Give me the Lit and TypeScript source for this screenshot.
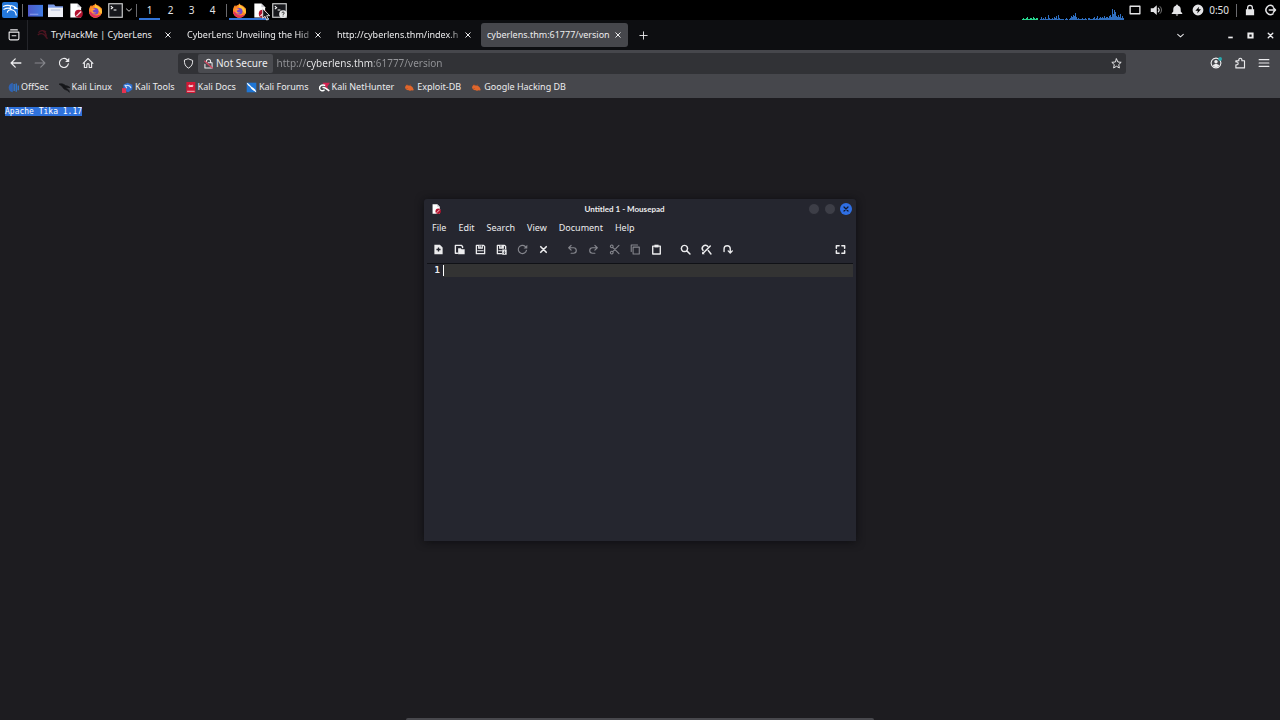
import { LitElement, html, svg, css, nothing } from "lit";
import type { TemplateResult } from "lit";
import { customElement, property } from "lit/decorators.js";
import { classMap } from "lit/directives/class-map.js";

/* Every glyph is drawn on a 16 x 16 grid. */
const line = (d: string, w = 1.4) =>
  svg`<path d=${d} fill="none" stroke="currentColor" stroke-width=${w} stroke-linecap="round" stroke-linejoin="round"/>`;
const solid = (d: string) => svg`<path d=${d} fill="currentColor" fill-rule="evenodd"/>`;

const bug = svg`<path d="M2.500 5.500l2-1.500 2 1 3 0 3 2.500 1.500 3.500 0 1-2 .5-2-.5-1 1-2-1-3-.5-2-2-.5-2z" fill="#e0662c"/><path d="M5 5l-1-2M9 5l1-2M5 9l-2 2" stroke="#8d4526" stroke-width="1"/>`;

const notepad = svg`<path d="M2.500 .5h7.500l4 4v11H2.500z" fill="#fff"/><path d="M10 .5v4h4z" fill="#c9c9cf"/><circle cx="11.500" cy="11.500" r="4.300" fill="#b3132f"/><path d="M9 14l5-5" stroke="#f7d9de" stroke-width="1.500"/>`;

const firefox = svg`<circle cx="8" cy="8.800" r="6.900" fill="#ff7a1e"/><path d="M1.200 7C1.500 4.500 2.500 3 3.500 2c.1 1.300.6 2 1.500 2.400C5.600 2.500 7 1.600 8.500.6c-.2 1.700 1 2.500 2.500 3.200 1.500.7 2.500 1.600 2.600 2.700.2-.7 0-1.600-.4-2.500C15 6 15.500 9 14.300 11.500 12.500 15.500 6.500 17 3 13.500 1.400 11.800.9 9.500 1.200 7z" fill="#ff8a25"/><path d="M8.500.6c-.2 1.700 1 2.500 2.500 3.200 2.500 1.200 3.300 3.500 2.600 6 1.300-2 1-4.200-.4-5.800C15 6 15.500 9 14.300 11.500L11 8 7 4z" fill="#ffc83a"/><path d="M1.200 9c.3 3 2.500 6.300 6.800 6.500 3 .1 5-1.500 6-3.500-3 2-9 2-10-2.500z" fill="#e5305f"/><circle cx="7.700" cy="8.800" r="3.500" fill="#7547cf"/><path d="M3.500 6.500c1.500-1 3-.5 4.500.3-1.500.2-2 1-3 1.200.2 2 2.500 2.600 4 1.800-1.200 2-4.500 1.700-5.500-.3z" fill="#ff9640"/>`;

const terminal = svg`<rect x=".8" y=".8" width="14.400" height="14.400" fill="#17181c" stroke="#d6d6d6" stroke-width="1.200"/><path d="M3 3.500l2 1.500-2 1.500M6 7.500h3" fill="none" stroke="#fff" stroke-width="1.100"/>`;

const icons: Record<string, TemplateResult> = {
  kali: svg`<rect width="16" height="16" rx="2" fill="#2477d8"/><path d="M1 4.500c3-1.300 6-1.500 8.300-.2M1.500 7.500c3-1.500 5.300-1.700 7.300-.8M9 3.500c-1.500 2.300-.5 4 1.500 4.500 2.200.5 3.500 2.500 3.800 5.500M9 3.500l3 1 2.500 2-2.500-.3M9.500 7.800c-2-.3-4 .8-4.200 2.800" fill="none" stroke="#fff" stroke-width="1.200"/>`,
  desktop: svg`<defs><linearGradient id="g" x2="1"><stop stop-color="#4f59c8"/><stop offset="1" stop-color="#3f7be0"/></linearGradient></defs><rect y="2" width="16" height="12.500" fill="url(#g)"/><path d="M2 12h9" stroke="#93a5ee"/>`,
  folder: svg`<path d="M0 1.500h6.500l1.500 2h8V15H0z" fill="#7c9be6"/><path d="M0 5h16v10H0z" fill="#eceef4"/><path d="M3 7.500h10" stroke="#aab6d4"/>`,
  notepad, firefox, terminal,
  runner: svg`${terminal}<circle cx="11.800" cy="11.800" r="4.200" fill="#e8e8e8"/><path d="M10.500 10.800c.2-1.600 2.700-1.400 2.500 0-.1.900-1.200.9-1.200 1.800M11.800 13.500v.8" fill="none" stroke="#222" stroke-width="1"/>`,
  down: line("M3 6l5 4.500L13 6", 1.8),
  display: line("M1.500 3h13v10h-13z", 1.8),
  volume: svg`${solid("M1 5.500h3.500L9 1.500v13L4.500 10.500H1z")}${line("M11 5.500c1.300 1.300 1.300 3.700 0 5", 1.5)}<path d="M13 3c3 2.500 3 7.500 0 10" fill="none" stroke="#777" stroke-width="1.300"/>`,
  bell: solid("M8 .8c.8 0 1.300.5 1.300 1.200C12 2.800 13 5 13 7.500V10l2 2.200v1H1v-1L3 10V7.500C3 5 4 2.800 6.700 2 6.700 1.300 7.200.8 8 .8zM6.300 14h3.400c-.2 2-3.200 2-3.400 0z"),
  power: solid("M8 .8a7.200 7.200 0 1 0 0 14.400A7.200 7.200 0 0 0 8 .8zM9.500 3.500L8.700 7H12l-5 5.800.8-3.800H4.500z"),
  padlock: solid("M4 7V5a4 4 0 0 1 8 0v2h1.500v8h-11V7zM5.700 7h4.600V5a2.300 2.300 0 0 0-4.600 0z"),
  logout: line("M12 3A6 6 0 1 0 12 13M7 8h8M12.500 5L15.300 8l-2.800 3", 2),
  allTabs: svg`${line("M3.500 1.200h9M1.500 4.200h13v8.300a2 2 0 0 1-2 2h-9a2 2 0 0 1-2-2z", 1.5)}${line("M5.500 9h5", 1.6)}`,
  thm: svg`<path d="M2 5c2-3 7-4 10-1M1 8c3-2.500 7-2 9 0M8 3c2 1 5 4 4 8M10 8l4 5" fill="none" stroke="#4c1420" stroke-width="1.800"/>`,
  close: line("M3.500 3.500l9 9M12.500 3.500l-9 9", 2),
  plus: line("M8 1.500v13M1.500 8h13", 1.6),
  minimize: solid("M4 10h8v3H4z"),
  restore: solid("M2.500 2.500h11v11h-11zM6 6v4h4V6z"),
  bigX: line("M4 4l8 8M12 4l-8 8", 2.4),
  back: line("M14.500 8h-13M7 2.500L1.500 8 7 13.500", 1.7),
  forward: line("M1.500 8h13M9 2.500L14.500 8 9 13.500", 1.5),
  reload: svg`${line("M13.800 9A6 6 0 1 1 12 3.600l1.500 1.300", 1.6)}${solid("M15 1v5.500H9.500z")}`,
  home: line("M1.500 8.500L8 2l6.500 6.500M3.200 7.500V14h3.200v-3.500a1.600 1.600 0 0 1 3.200 0V14h3.200V7.500", 1.5),
  shield: line("M8 1.300l6 2.200c.2 5-1.200 8.800-6 11.200C3.200 12.300 1.800 8.500 2 3.500z", 1.4),
  insecure: svg`${line("M5 7V4.800a3 3 0 0 1 6 0V7M2.800 14.500h10.400V7H7.500M2.800 14.500V9", 1.5)}<path d="M2 4l12 11" stroke="#d64560" stroke-width="1.800"/>`,
  star: line("M8 1.300l2 4.500 4.800.5-3.600 3.300 1 4.900L8 12l-4.200 2.500 1-4.900L1.200 6.300 6 5.800z", 1.4),
  account: svg`${line("M8 1.500a6.500 6.500 0 1 0 .01 0z", 1.5)}${solid("M8 4a2.300 2.300 0 1 1-.01 0zM3.800 11.500C5 8.800 11 8.800 12.200 11.500 10.500 13.800 5.500 13.800 3.800 11.500z")}<circle cx="13.500" cy="2.500" r="2.500" fill="#28a8ae"/>`,
  extension: line("M2.500 14.500v-4c4 .8 4-4.800 0-4V5h4c-1-4.500 4.800-4.500 4 0h3.500v9.500z", 1.5),
  menu: line("M1.500 3.500h13M1.500 8h13M1.500 12.500h13", 1.5),
  offsec: svg`<path d="M7 1v14C3 14 1 12 1 8s2-6 6-7z" fill="#2f63b4"/><path d="M9 3v10M12 2v12M15 5v7" stroke="#3178cf" stroke-width="2"/>`,
  dragon: svg`<path d="M0 3c4-1 7 0 9 2l4 1 3 2-4 0c-3 0-3 1 0 2 2 1 3 3 3 5-2-3-4-3-6-4C6 10 6 7 4 6S2 4 0 3z" fill="#151619" stroke="#151619"/>`,
  tools: svg`<path d="M2 4l6-3 7 3v7l-6 4-7-3z" fill="#2d6fd0"/><path d="M5 6c3-2 7-1 8 3M4 4l3 5" fill="none" stroke="#c8dcf9" stroke-width="1.700"/><path d="M0 9h6v7H0z" fill="#e43250"/>`,
  docs: svg`<path d="M2 0h13v16H2z" fill="#d31835"/><path d="M8.500 6C5 2 4 9 8.500 6c4-4 4 3 0 0z" fill="none" stroke="#fff" stroke-width="1.400"/><path d="M3 13.500h11" stroke="#fff"/>`,
  forums: svg`<path d="M1 1h14v14H1z" fill="#1e75d5"/><path d="M1 1c5 2 6 6 9 7 3 2 4 4 5 7-5-3-8-5-9-8C4 6 2 4 1 1z" fill="#fff"/>`,
  nethunter: svg`<path d="M5 1h11l-4 6 3 8z" fill="#d5204f"/><path d="M9 5C4 3 0 6 1 10c1 3 5 4 7 1M5 8c4-1 6 2 10 5" fill="none" stroke="#fff" stroke-width="2.200"/>`,
  bug,
  fileNew: solid("M2 1h8l4 4v10H2zM7 5v2H5v2h2v2h2V9h2V7H9V5z"),
  fileOpen: svg`${line("M5 13.500H2V2h9l1.500 2v1", 2)}${solid("M6 6h4l1 1.500h4.500V15H6z")}`,
  save: svg`${line("M2 2h10.500L14 3.500V14H2z", 1.900)}${solid("M4.500 2h7v5h-7zM3.500 9h9v1.500h-9z")}<path d="M7.200 2v3M9.500 2v3" stroke="#252730" stroke-width="1"/>`,
  saveAs: svg`${line("M8 14H2V2h10.500L14 3.500V7", 1.900)}${solid("M4.500 2h7v5h-7zM3.500 9h5v1.500h-5zM9 8h6.500v7.500H9z")}<path d="M7.200 2v3M12.300 9.500v4.500M11 12.500l1.300 1.500 1.300-1.500" fill="none" stroke="#252730" stroke-width="1"/>`,
  undo: line("M6 2L2.500 5.500 6 9M3 5.500h6.500a4 4 0 0 1 0 8H6", 1.700),
  redo: line("M10 2l3.500 3.500L10 9M13 5.500H6.500a4 4 0 0 0 0 8H10", 1.700),
  cut: line("M4 1.500a2 2 0 1 0 .01 0zM4 10.500a2 2 0 1 0 .01 0zM5.500 5l9 9M5.500 11l9-9", 1.600),
  copy: line("M4.500 4.500h9v10h-9zM1.800 11V1.500H11", 1.600),
  paste: svg`${line("M2.500 3h11v11.500h-11z", 2)}${solid("M5 1h6v4H5z")}`,
  find: line("M6.500 2a4.500 4.500 0 1 0 .01 0zM10 10l4.500 4.500", 2.100),
  replace: svg`${line("M3 9.500a4.500 4.500 0 0 1 7-6M10.500 9.500l4 5", 2.100)}${line("M13.500 3L3 13.500", 2.200)}${solid("M1.500 11l4 4H1.500z")}`,
  goto: line("M3 11V7a4.500 4.500 0 0 1 9 0v5.500M9 10l3 3 3-3", 2),
  fullscreen: line("M2 6V2.500h4M10 2.500h4V6M14 10v3.500h-4M6 13.500H2V10", 2.200),
};

@customElement("ui-icon")
class UiIcon extends LitElement {
  @property() name = "";
  static styles = css`
    :host { display: block; flex: none; width: 12px; height: 12px; }
    svg { display: block; width: 100%; height: 100%; overflow: visible; }
  `;
  render() {
    return html`<svg viewBox="0 0 16 16" aria-hidden="true">${icons[this.name] ?? nothing}</svg>`;
  }
}

const reset = css`
  * { box-sizing: border-box; }
  button, input, textarea { font: inherit; color: inherit; background: none; border: 0; padding: 0; margin: 0; }
  button { display: grid; place-items: center; flex: none; }
  a { color: inherit; text-decoration: none; }
`;

const launchers = [
  ["desktop", "Show desktop"], ["folder", "Files"], ["notepad", "Text editor"],
  ["firefox", "Firefox"], ["terminal", "Terminal"],
];

/* Load samples, in pixels of height. */
const idle = [1, 2, 1, 1, 2, 3, 1, 1, 2, 2, 1, 3, 2, 1, 2, 2];
const load = [
  1, 3, 1, 2, 1, 3, 1, 1, 5, 2, 1, 1, 2, 1, 3, 2, 4, 1, 5, 2, 1, 1, 1, 1, 0, 1, 2, 1, 0, 1, 2, 4, 3, 5, 4, 7, 3, 1,
  2, 1, 1, 1, 2, 1, 1, 2, 1, 0, 2, 2, 1, 1, 1, 2, 3, 1, 2, 4, 1, 2, 3, 2, 3, 2, 4, 2, 3, 3, 2, 4, 5, 3, 11, 6, 10, 8, 4, 3, 5, 3, 6, 2, 4, 2,
];

@customElement("top-panel")
class TopPanel extends LitElement {
  static styles = [reset, css`
    :host { display: block; background: #000; color: #e4e4e6; }
    .bar { display: flex; align-items: center; height: 20px; }
    .bar > * { flex: none; }
    .kali { width: 20px; height: 20px; }
    .kali ui-icon { width: 16px; height: 16px; }
    .sep { width: 1px; height: 13px; background: #6a6a6e; margin: 0 2px; }
    .wide { margin: 0 2px 0 3px; }
    .cell { width: 20px; height: 20px; }
    .cell ui-icon { width: 15px; height: 15px; }
    .more { width: 7px; height: 20px; margin-right: 2px; }
    .more ui-icon { width: 8px; height: 8px; }
    .space { width: 21px; height: 20px; border-bottom: 2px solid transparent; border-top: 2px solid transparent; }
    .on { border-bottom-color: #3274d8; }
    .cell.on { background: linear-gradient(#3274d8, #3274d8) bottom / 100% 2px no-repeat; }
    .grow { flex: 1; }
    .graph { display: block; width: 102px; height: 20px; }
    .tray { width: 21px; height: 20px; }
    .clock { padding: 0 5px 0 1px; }
    .end { width: 20px; height: 20px; }
    .lock { margin: 0 0 0 1px; }
  `];
  render() {
    const bars = (a: number[], x0: number, c: string) =>
      a.map((h, i) => svg`<rect x=${x0 + i} y=${20 - h} width="1" height=${h} fill=${c}/>`);
    return html`<nav class="bar" aria-label="Panel">
      <button class="kali" aria-label="Applications"><ui-icon name="kali"></ui-icon></button>
      <span class="sep"></span>
      ${launchers.map(([n, l]) => html`<button class="cell" aria-label=${l}><ui-icon name=${n}></ui-icon></button>`)}
      <button class="more" aria-label="More terminals"><ui-icon name="down"></ui-icon></button>
      <span class="sep"></span>
      ${[1, 2, 3, 4].map((n) => html`<button class=${classMap({ space: true, on: n === 1 })}>${n}</button>`)}
      <span class="sep wide"></span>
      ${["firefox", "notepad", "runner"].map((n) => html`<button class=${classMap({ cell: true, on: n !== "runner" })} aria-label=${n}><ui-icon name=${n}></ui-icon></button>`)}
      <span class="grow"></span>
      <svg class="graph" viewBox="0 0 102 20" aria-hidden="true">${bars(idle, 0, "#27d58e")}${bars(load, 18, "#2f6fc0")}</svg>
      ${["display", "volume", "bell", "power"].map((n) => html`<button class="tray" aria-label=${n}><ui-icon name=${n}></ui-icon></button>`)}
      <time class="clock">0:50</time>
      <span class="sep"></span>
      <button class="end lock" aria-label="Lock screen"><ui-icon name="padlock"></ui-icon></button>
      <button class="end" aria-label="Log out"><ui-icon name="logout"></ui-icon></button>
    </nav>`;
  }
}

const tabs = [
  { title: "TryHackMe | CyberLens", icon: "thm" },
  { title: "CyberLens: Unveiling the Hid", long: true },
  { title: "http://cyberlens.thm/index.h", long: true },
  { title: "cyberlens.thm:61777/version", active: true },
];
const bookmarks = [
  ["offsec", "OffSec"], ["dragon", "Kali Linux"], ["tools", "Kali Tools"], ["docs", "Kali Docs"],
  ["forums", "Kali Forums"], ["nethunter", "Kali NetHunter"], ["bug", "Exploit-DB"], ["bug", "Google Hacking DB"],
];

@customElement("web-browser")
class WebBrowser extends LitElement {
  static styles = [reset, css`
    :host { display: flex; flex-direction: column; background: #1d1c20; color: #ececee; }
    .tabs { display: flex; align-items: center; height: 30px; background: #0d0e11; }
    .all { width: 28px; height: 30px; border-right: 1px solid #24252a; margin-right: 3px; }
    .tab { display: flex; align-items: center; width: 147px; height: 24px; margin-right: 3px; padding: 0 5px 0 6px; border-radius: 3px; font-size: 9px; }
    .tab ui-icon { margin-right: 2px; }
    .active { background: #46474c; }
    .label { flex: 1; min-width: 0; white-space: nowrap; }
    .fade { mask-image: linear-gradient(to right, #000 calc(100% - 14px), #0003); }
    .x { width: 11px; height: 12px; }
    .x ui-icon { width: 8px; height: 8px; margin: 0; }
    .add { width: 24px; height: 24px; }
    .add ui-icon { width: 9px; height: 9px; }
    .grow { flex: 1; }
    .drop { width: 20px; height: 20px; margin-right: 30px; }
    .win { width: 20px; height: 20px; }
    .win ui-icon, .drop ui-icon { width: 9px; height: 9px; }
    .nav { display: flex; align-items: center; height: 26px; padding: 0 4px; background: #46474c; }
    .btn { width: 24px; height: 24px; }
    .off { color: #85868b; }
    .url { display: flex; align-items: center; flex: 1; height: 21px; margin: 0 78px; background: #313236; border-radius: 3px; }
    .mini { width: 20px; height: 20px; }
    .chip { display: flex; align-items: center; gap: 2px; height: 19px; padding: 0 5px; background: #4a4b50; border-radius: 2px; white-space: nowrap; }
    .addr { flex: 1; min-width: 0; height: 20px; margin-left: 4px; outline: 0; color: transparent; background: linear-gradient(to right, #949599 29px, #ececee 29px, #ececee 96px, #949599 96px); -webkit-background-clip: text; background-clip: text; }
    .mini ui-icon, .chip ui-icon { width: 11px; height: 11px; }
    .marks { display: flex; align-items: center; gap: 10px; height: 22px; padding: 0 8px; background: #46474c; white-space: nowrap; font-size: 9px; }
    .mark { display: flex; align-items: center; gap: 2px; }
    .mark ui-icon { width: 11px; height: 11px; }
    .page { flex: 1; padding: 8px 5px; }
    .page pre { margin: 0; font: 8px/11px "DejaVu Sans Mono", monospace; }
    .sel { background: #2f72dc; color: #fff; }
  `];
  render() {
    return html`
      <div class="tabs">
        <button class="all" aria-label="List all tabs"><ui-icon name="allTabs"></ui-icon></button>
        ${tabs.map((t) => html`<div class=${classMap({ tab: true, active: !!t.active })}>
          ${t.icon ? html`<ui-icon name=${t.icon}></ui-icon>` : nothing}
          <span class=${classMap({ label: true, fade: !!t.long })}>${t.title}</span>
          <button class="x" aria-label="Close tab"><ui-icon name="close"></ui-icon></button>
        </div>`)}
        <button class="add" aria-label="New tab"><ui-icon name="plus"></ui-icon></button>
        <span class="grow"></span>
        <button class="drop" aria-label="Tab list"><ui-icon name="down"></ui-icon></button>
        ${["minimize", "restore", "bigX"].map((n) => html`<button class="win" aria-label=${n}><ui-icon name=${n}></ui-icon></button>`)}
      </div>
      <div class="nav">
        ${["back", "forward", "reload", "home"].map((n) => html`<button class=${classMap({ btn: true, off: n === "forward" })} aria-label=${n}><ui-icon name=${n}></ui-icon></button>`)}
        <div class="url">
          <button class="mini" aria-label="Tracking protection"><ui-icon name="shield"></ui-icon></button>
          <button class="chip"><ui-icon name="insecure"></ui-icon><span>Not Secure</span></button>
          <input class="addr" type="text" aria-label="Address" value="http://cyberlens.thm:61777/version">
          <button class="mini" aria-label="Bookmark"><ui-icon name="star"></ui-icon></button>
        </div>
        ${["account", "extension", "menu"].map((n) => html`<button class="btn" aria-label=${n}><ui-icon name=${n}></ui-icon></button>`)}
      </div>
      <nav class="marks" aria-label="Bookmarks">
        ${bookmarks.map(([n, l]) => html`<a class="mark" href="#"><ui-icon name=${n}></ui-icon>${l}</a>`)}
      </nav>
      <main class="page"><pre><span class="sel">Apache Tika 1.17</span></pre></main>`;
  }
}

const tools: [string, boolean?][][] = [
  [["fileNew"], ["fileOpen"], ["save"], ["saveAs"], ["reload", true], ["bigX"]],
  [["undo", true], ["redo", true], ["cut", true], ["copy", true], ["paste"]],
  [["find"], ["replace"], ["goto"]],
];

@customElement("mouse-pad")
class MousePad extends LitElement {
  static styles = [reset, css`
    :host { display: flex; flex-direction: column; background: #25262f; color: #ececee; box-shadow: 0 1px 8px #0a0a0ecc; border-radius: 3px 3px 0 0; }
    .title { display: grid; grid-template-columns: auto 1fr auto; align-items: center; height: 19px; padding: 0 4px 0 7px; }
    .title ui-icon { width: 10px; height: 10px; }
    h1 { margin: 0; text-align: center; font: 700 8px/12px Lato, "Noto Sans", sans-serif; }
    .dots { display: flex; gap: 4px; justify-content: end; }
    .dot { width: 12px; height: 12px; border-radius: 50%; background: #3d3e47; border: 1px solid #25262f; }
    .dot.quit { background: #2f6fe4; border: 0; color: #10182c; }
    .dot ui-icon { width: 8px; height: 8px; }
    .menus { display: flex; gap: 12px; height: 19px; padding: 0 8px; font-size: 9px; }
    .tools { display: flex; align-items: center; height: 26px; padding: 0 5px 1px 4px; }
    .group { display: flex; margin-right: 8px; }
    .tool { width: 21px; height: 22px; }
    .tool ui-icon { width: 11px; height: 11px; }
    .off { color: #85868d; }
    .grow { flex: 1; }
    .edit { display: grid; grid-template-columns: 16px 1fr; flex: 1; margin: 0 3px 3px; border-top: 1px solid #101116; font: 9px/13px "DejaVu Sans Mono", monospace; }
    .num { padding-right: 3px; text-align: right; font-weight: 700; }
    .text { width: 100%; height: 100%; resize: none; outline: 0; background: linear-gradient(#fff, #fff) 0 1px / 1px 11px no-repeat, linear-gradient(#333, #333) 0 0 / 100% 13px no-repeat; }
  `];
  render() {
    return html`
      <header class="title">
        <ui-icon name="notepad"></ui-icon>
        <h1>Untitled 1 - Mousepad</h1>
        <div class="dots">
          <button class="dot" aria-label="Minimize"></button>
          <button class="dot" aria-label="Maximize"></button>
          <button class="dot quit" aria-label="Close"><ui-icon name="bigX"></ui-icon></button>
        </div>
      </header>
      <nav class="menus">${["File", "Edit", "Search", "View", "Document", "Help"].map((m) => html`<button>${m}</button>`)}</nav>
      <div class="tools">
        ${tools.map((g) => html`<div class="group">${g.map(([n, off]) => html`<button class=${classMap({ tool: true, off: !!off })} aria-label=${n}><ui-icon name=${n}></ui-icon></button>`)}</div>`)}
        <span class="grow"></span>
        <button class="tool" aria-label="Fullscreen"><ui-icon name="fullscreen"></ui-icon></button>
      </div>
      <div class="edit"><span class="num">1</span><textarea class="text" aria-label="Document" spellcheck="false"></textarea></div>`;
  }
}

@customElement("app-root")
class AppRoot extends LitElement {
  static styles = css`
    :host { display: flex; flex-direction: column; position: relative; min-height: 100vh; overflow: hidden; font: 10px/14px "Noto Sans", sans-serif; }
    web-browser { flex: 1; }
    mouse-pad { position: absolute; top: 199px; left: calc(50% - 216px); width: 432px; height: 342px; }
    .dock { position: absolute; bottom: 0; left: calc(50% - 234px); width: 468px; height: 2px; background: #48484d; border-radius: 3px 3px 0 0; }
    .pointer { position: absolute; left: 262px; top: 8px; width: 9px; height: 13px; }
  `;
  render() {
    return html`
      <top-panel></top-panel>
      <web-browser></web-browser>
      <mouse-pad></mouse-pad>
      <div class="dock"></div>
      <svg class="pointer" viewBox="0 0 9 13" aria-hidden="true"><path d="M.7.7v9.600l2.300-2 1.700 3.800 1.600-.8L4.700 7.700h3.100z" fill="#15161a" stroke="#e8e8e8" stroke-width=".9"/></svg>`;
  }
}
